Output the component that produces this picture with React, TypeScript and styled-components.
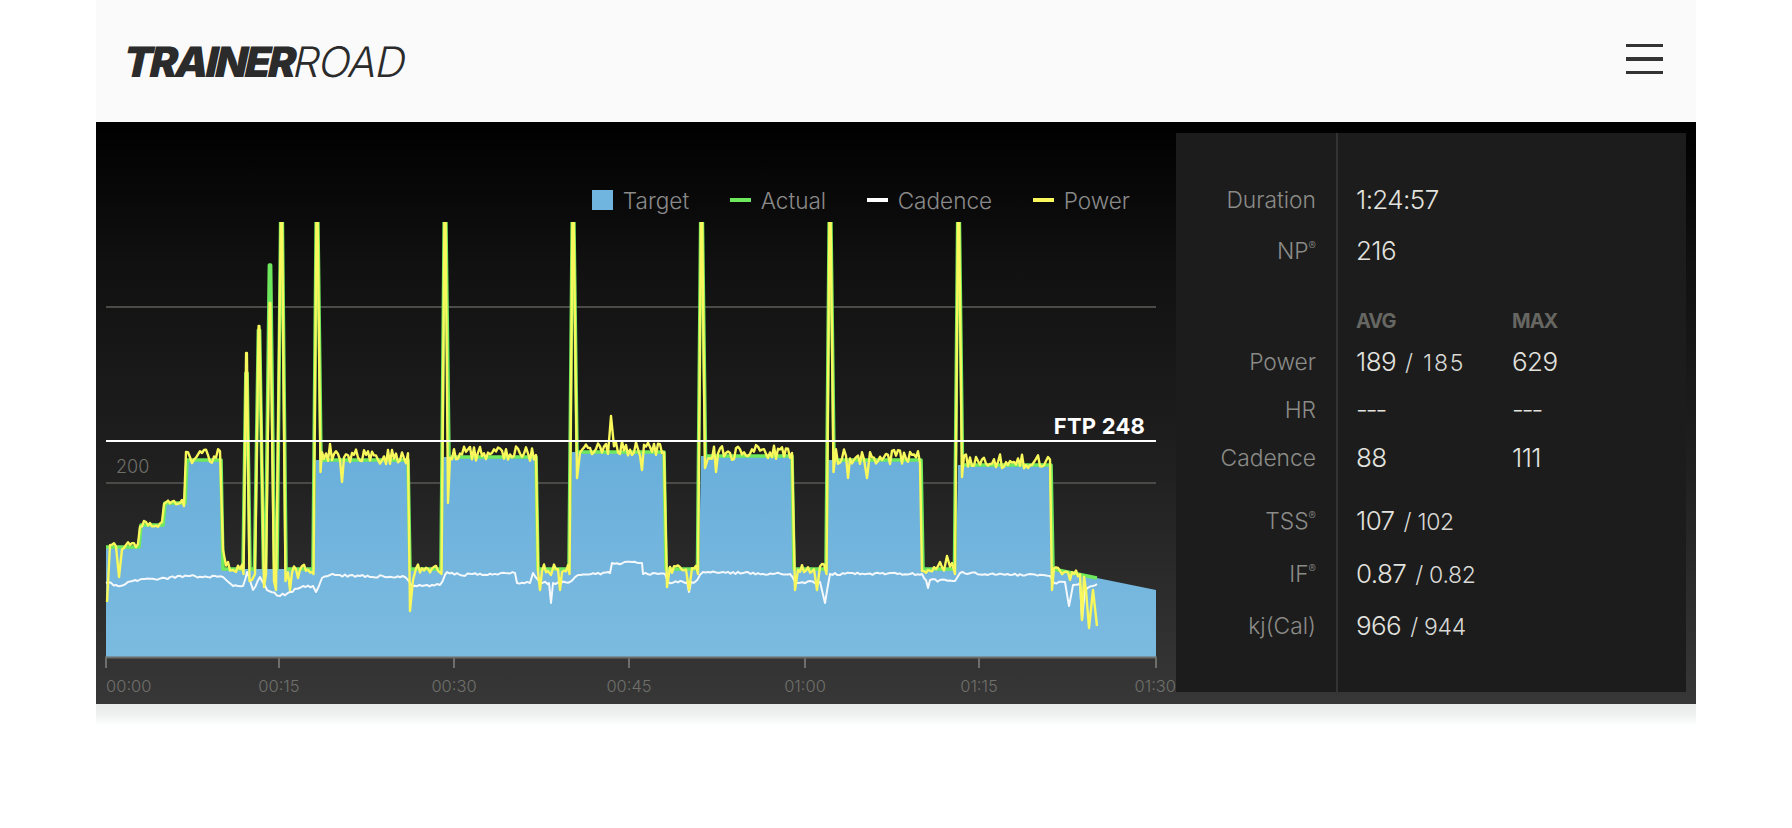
import React from 'react'
import styled, { createGlobalStyle } from 'styled-components'

const GlobalStyle = createGlobalStyle`
  html, body {
    margin: 0;
    background: #fff;
    font-family: Inter, Lato, sans-serif;
  }
`

const Page = styled.div`
  width: 1600px;
  margin: 0 auto;
`

const Header = styled.header`
  height: 122px;
  padding: 0 33px 0 24px;
  box-sizing: border-box;
  background: #fafafa;
  display: flex;
  align-items: center;
  justify-content: space-between;
`

const Logo = styled.div`
  font-size: 42px;
  line-height: 1;
  color: #2b2b2b;
  white-space: nowrap;
  transform: translateY(1px) skewX(-12deg);
  transform-origin: left bottom;
`

const LogoBold = styled.span`
  font-weight: 900;
  letter-spacing: -2.7px;
`

const LogoLight = styled.span`
  font-weight: 300;
  letter-spacing: -1px;
`

const Burger = styled.div`
  width: 37px;
  display: flex;
  flex-direction: column;
  gap: 10px;
  transform: translateY(-2px);
`

const BurgerBar = styled.span`
  height: 3.4px;
  background: #333;
`

const Panel = styled.section`
  height: 582px;
  display: flex;
  background: linear-gradient(#000 0%, #111 25%, #1f1f1f 58%, #373737 100%);
`

const PanelShadow = styled.div`
  height: 22px;
  background: linear-gradient(#e9ebeb 0%, #eef0f0 45%, #fff 100%);
`

const ChartColumn = styled.div`
  width: 1080px;
  flex: none;
`

const Legend = styled.div`
  height: 30px;
  margin-top: 63px;
  padding-right: 46px;
  display: flex;
  align-items: center;
  justify-content: flex-end;
  gap: 41px;
`

const LegendItem = styled.div`
  display: flex;
  align-items: center;
  gap: 10px;
  font-size: 22.6px;
  font-weight: 300;
  color: #8a8a8a;
`

const Swatch = styled.span<{ $color: string; $square?: boolean }>`
  width: 20.5px;
  height: ${({ $square }) => ($square ? '20px' : '4px')};
  background: ${({ $color }) => $color};
`

const ChartSvg = styled.svg`
  display: block;
  width: 1080px;
  height: 489px;
`

const AxisLabel = styled.text`
  font-size: 16.5px;
  font-weight: 300;
  fill: #70706b;
`

const SidePanel = styled.aside`
  width: 510px;
  margin: 11px 10px 12px 0;
  padding-top: 46px;
  box-sizing: border-box;
  background: linear-gradient(#333, #333) 160px 0 / 2px 100% no-repeat #1c1c1c;
`

const Row = styled.div<{ $gap?: number }>`
  height: 40px;
  margin-top: ${({ $gap }) => $gap ?? 0}px;
  display: grid;
  grid-template-columns: 140px 116px 1fr;
  column-gap: 40px;
  align-items: center;
`

const Label = styled.div`
  text-align: right;
  font-size: 22.8px;
  font-weight: 300;
  color: #8b8b88;
  white-space: nowrap;

  sup {
    font-size: 11px;
    line-height: 0;
  }
`

const Value = styled.div`
  font-size: 26px;
  font-weight: 300;
  letter-spacing: -0.6px;
  color: #e2e2df;
  white-space: nowrap;
`

const Dashes = styled(Value)`
  letter-spacing: -2px;
`

const SubValue = styled.span<{ $wide?: boolean }>`
  font-size: 23px;
  margin-left: 9px;
  letter-spacing: ${({ $wide }) => ($wide ? '1.8px' : '-0.3px')};
  color: #d8d8d5;
`

const ColumnHead = styled.div`
  font-size: 20px;
  font-weight: 700;
  letter-spacing: -1px;
  color: #666662;
`

type Point = [number, number]

// target workout, x is the page position and y the top of the block
const blocks: Point[] = [
  [106, 547], [140, 525], [164, 503], [186, 460], [222, 569], [315, 460], [409, 569], [442, 457],
  [537, 569], [571, 452], [665, 569], [700, 456], [793, 569], [827, 460], [922, 569], [957, 465],
]

function targetY(x: number) {
  if (x >= 1052) return 569 + ((x - 1052) * 21) / 104
  let y = blocks[0][1]
  for (const [bx, by] of blocks) if (x >= bx) y = by
  return y
}

function targetOutline(): Point[] {
  const pts: Point[] = [[106, 547]]
  blocks.forEach(([x, y], i) => {
    if (i > 0) pts.push([x - 1, blocks[i - 1][1]], [x + 1, y])
  })
  pts.push([1051, 465], [1053, 569], [1156, 590])
  return pts
}

// x, top of the green line, top of the yellow line, half width
const spikes: [number, number, number, number][] = [
  [246.5, 373, 353, 3],
  [259, 330, 326, 4],
  [270, 265, 303, 4],
  [281.5, 200, 200, 4],
  [317, 200, 200, 3.5],
  [445, 200, 200, 3.5],
  [573, 200, 200, 3.5],
  [701.5, 200, 200, 3.5],
  [830, 200, 200, 3.5],
  [958.5, 200, 200, 3.5],
]

const dips: Point[] = [
  [107, 602], [119, 577], [223, 550], [228, 562], [233, 570], [252, 580], [264, 587], [276, 590],
  [290, 590], [298, 578], [330, 444], [342, 482], [410, 611], [413, 580], [448, 503], [540, 590],
  [551, 575], [560, 590], [577, 478], [611, 416], [642, 470], [667, 587], [689, 590], [716, 472],
  [795, 590], [817, 590], [848, 478], [867, 478], [928, 570], [940, 562], [947, 556], [952, 563],
  [1052, 590], [1070, 580], [1082, 620], [1086, 590], [1089, 628], [1093, 590], [1097, 626],
]

const cadenceKeys: Point[] = [
  [106, 583], [120, 586], [135, 580], [165, 578], [190, 576], [223, 577], [233, 586], [243, 586],
  [247, 572], [253, 590], [260, 577], [267, 590], [280, 596], [290, 592], [303, 586], [313, 586],
  [316, 592], [322, 578], [330, 575], [405, 577], [412, 586], [440, 585], [447, 572], [460, 575],
  [515, 573], [517, 583], [530, 583], [533, 573], [540, 583], [549, 583], [551, 603], [553, 583],
  [570, 582], [578, 575], [610, 573], [612, 563], [642, 563], [643, 574], [665, 574], [668, 582],
  [687, 582], [689, 592], [691, 582], [695, 582], [703, 572], [790, 574], [795, 582], [820, 582],
  [825, 603], [830, 574], [922, 574], [926, 580], [928, 588], [930, 580], [955, 581], [960, 573],
  [1050, 576], [1054, 583], [1065, 582], [1069, 606], [1073, 585], [1080, 583], [1082, 620],
  [1085, 590], [1097, 584],
]

function noiseSource(seed: number) {
  let s = seed
  return () => {
    s = (s * 16807) % 2147483647
    return s / 2147483647
  }
}

function toPath(pts: Point[]) {
  return pts.map(([x, y], i) => `${i ? 'L' : 'M'}${x.toFixed(1)} ${y.toFixed(1)}`).join(' ')
}

function buildActual(): Point[] {
  let pts = targetOutline().filter(([x]) => x <= 1097)
  pts.push([1097, targetY(1097)])
  spikes.forEach(([x, top, , w]) => {
    pts = pts.filter(([px]) => Math.abs(px - x) > w)
    pts.push(
      [x - w - 0.5, targetY(x - w - 0.5)],
      [x - 0.6, top],
      [x + 0.6, top],
      [x + w + 0.5, targetY(x + w + 0.5)],
    )
  })
  return pts.sort((a, b) => a[0] - b[0])
}

function buildPower(): Point[] {
  const rnd = noiseSource(4711)
  let pts: Point[] = []
  for (let x = 106; x <= 1097; x += 2) {
    const t = targetY(x)
    const amp = t < 500 ? 15 : 9
    pts.push([x, t + 4 - rnd() * amp])
  }
  spikes.forEach(([x, , top, w]) => {
    pts = pts.filter(([px]) => Math.abs(px - x) > w + 1)
    pts.push([x - w, targetY(x - w) + 5], [x - 0.4, top], [x + 0.4, top], [x + w, targetY(x + w) + 12])
  })
  dips.forEach(([x, y]) => {
    pts = pts.filter(([px]) => Math.abs(px - x) > 1.5)
    pts.push([x, y])
  })
  return pts.sort((a, b) => a[0] - b[0])
}

function buildCadence(): Point[] {
  const rnd = noiseSource(99)
  const pts: Point[] = []
  cadenceKeys.forEach(([x, y], i) => {
    pts.push([x, y])
    const next = cadenceKeys[i + 1]
    if (!next) return
    for (let px = x + 2.5; px < next[0] - 1; px += 2.5) {
      const f = (px - x) / (next[0] - x)
      pts.push([px, y + (next[1] - y) * f + (rnd() - 0.5) * 2.6])
    }
  })
  return pts
}

const ticks = [
  { x: 106, text: '00:00', anchor: 'start' },
  { x: 279, text: '00:15', anchor: 'middle' },
  { x: 454, text: '00:30', anchor: 'middle' },
  { x: 629, text: '00:45', anchor: 'middle' },
  { x: 805, text: '01:00', anchor: 'middle' },
  { x: 979, text: '01:15', anchor: 'middle' },
  { x: 1176, text: '01:30', anchor: 'end' },
]

function Chart() {
  const outline = targetOutline()
  const fill = `${toPath(outline)} L1156 657 L106 657 Z`
  return (
    <ChartSvg viewBox="96 215 1080 489">
      <defs>
        <linearGradient id="targetFill" x1="0" y1="0" x2="0" y2="1">
          <stop offset="0" stopColor="#69afdb" />
          <stop offset="1" stopColor="#7cbbe0" />
        </linearGradient>
        <clipPath id="plotClip">
          <rect x="100" y="222" width="1060" height="440" />
        </clipPath>
      </defs>
      <path d="M106 307H1156M106 483H1156" stroke="#4a4a47" strokeWidth="2" />
      <AxisLabel x="116" y="473" style={{ fontSize: 18 }}>200</AxisLabel>
      <path d={fill} fill="url(#targetFill)" />
      <g clipPath="url(#plotClip)" fill="none" strokeLinejoin="round">
        <path d={toPath(buildActual())} stroke="#6ee85c" strokeWidth="3.6" />
        <path d={toPath(buildCadence())} stroke="#f4f8fa" strokeWidth="2" />
        <path d={toPath(buildPower())} stroke="#f8f85c" strokeWidth="2.4" />
      </g>
      <path d="M106 441H1156" stroke="#fff" strokeWidth="2" />
      <text x="1145" y="434" textAnchor="end" fontSize="22" fontWeight="700" letterSpacing="0.2" fill="#fff">FTP 248</text>
      <path d="M105 657.5H1157" stroke="#6d6d6a" strokeWidth="2" />
      {ticks.map((t) => {
        const tickX = t.x === 1176 ? 1156 : t.x
        return (
          <g key={t.text}>
            <path d={`M${tickX} 657V668`} stroke="#6d6d6a" strokeWidth="2" />
            <AxisLabel x={t.x} y="692" textAnchor={t.anchor as 'start' | 'middle' | 'end'}>{t.text}</AxisLabel>
          </g>
        )
      })}
    </ChartSvg>
  )
}

export default function App() {
  return (
    <Page>
      <GlobalStyle />
      <Header>
        <Logo>
          <LogoBold>TRAINER</LogoBold>
          <LogoLight>ROAD</LogoLight>
        </Logo>
        <Burger>
          <BurgerBar />
          <BurgerBar />
          <BurgerBar />
        </Burger>
      </Header>
      <Panel>
        <ChartColumn>
          <Legend>
            <LegendItem><Swatch $color="#6fb5df" $square />Target</LegendItem>
            <LegendItem><Swatch $color="#6ee85c" />Actual</LegendItem>
            <LegendItem><Swatch $color="#fff" />Cadence</LegendItem>
            <LegendItem><Swatch $color="#f8f85c" />Power</LegendItem>
          </Legend>
          <Chart />
        </ChartColumn>
        <SidePanel>
          <Row>
            <Label>Duration</Label>
            <Value>1:24:57</Value>
          </Row>
          <Row $gap={11}>
            <Label>NP<sup>®</sup></Label>
            <Value>216</Value>
          </Row>
          <Row $gap={31}>
            <span />
            <ColumnHead>AVG</ColumnHead>
            <ColumnHead>MAX</ColumnHead>
          </Row>
          <Row>
            <Label>Power</Label>
            <Value>189<SubValue $wide>/ 185</SubValue></Value>
            <Value>629</Value>
          </Row>
          <Row $gap={8}>
            <Label>HR</Label>
            <Dashes>---</Dashes>
            <Dashes>---</Dashes>
          </Row>
          <Row $gap={8}>
            <Label>Cadence</Label>
            <Value>88</Value>
            <Value>111</Value>
          </Row>
          <Row $gap={23}>
            <Label>TSS<sup>®</sup></Label>
            <Value>107<SubValue>/ 102</SubValue></Value>
          </Row>
          <Row $gap={13}>
            <Label>IF<sup>®</sup></Label>
            <Value>0.87<SubValue>/ 0.82</SubValue></Value>
          </Row>
          <Row $gap={12}>
            <Label>kj(Cal)</Label>
            <Value>966<SubValue>/ 944</SubValue></Value>
          </Row>
        </SidePanel>
      </Panel>
      <PanelShadow />
    </Page>
  )
}
